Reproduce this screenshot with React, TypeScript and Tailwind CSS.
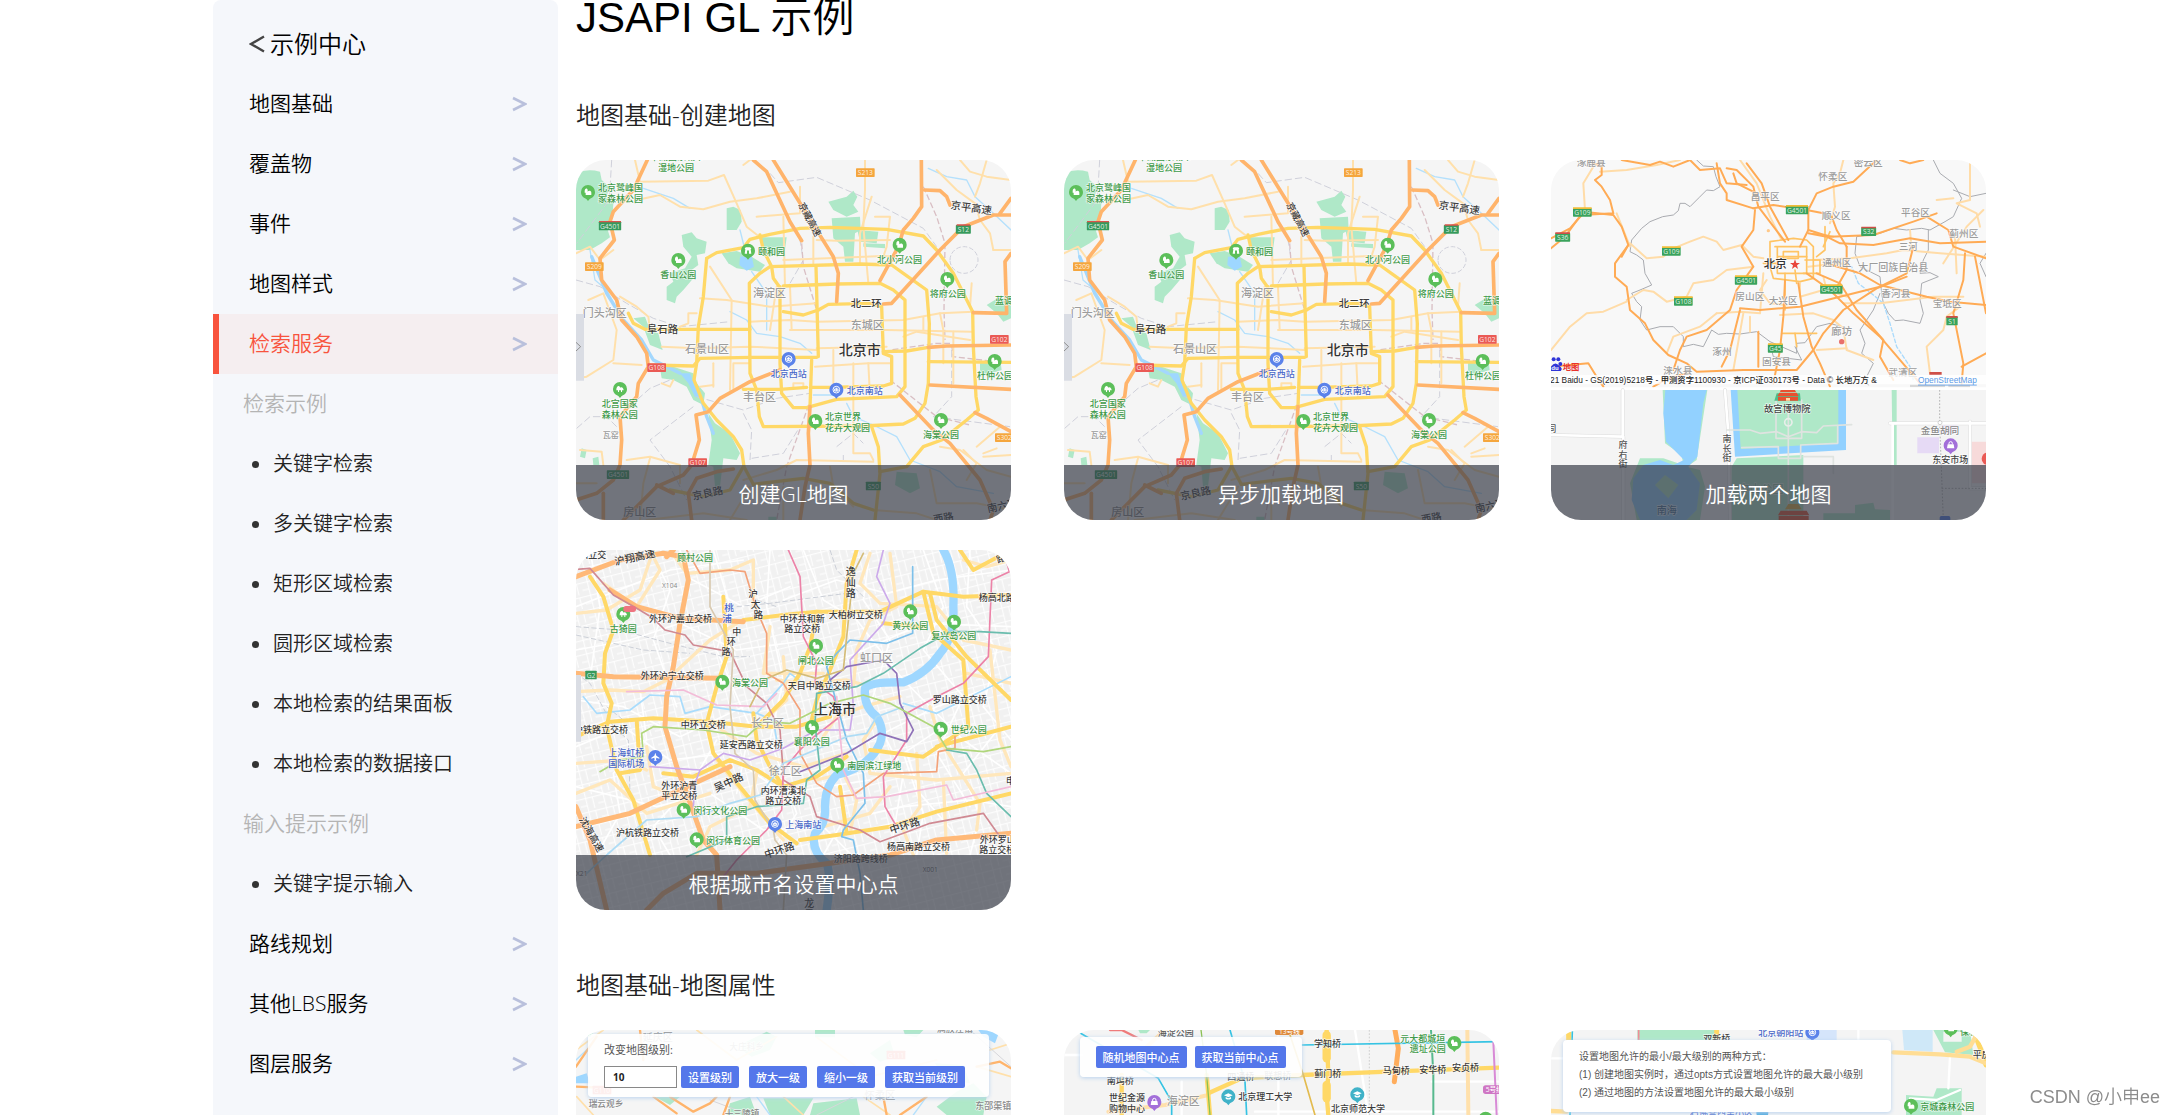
import type { ReactNode } from "react";

type Road = { color: string; width: number; dash?: string; paths: string[] };

// text, x, y (middle of the line), size, color, rotation
type Label = [string, number, number, number, string, number?];

// text, x, y, background
type Shield = [string, number, number, string];

const GREEN = "#3f9a4a";
const GRAY = "#9c9c9c";
const DARK = "#3c3c3c";
const BLUE = "#4a68c8";
const PARK = "#afe8c8";
const WATER = "#9ed7ff";
const ORANGE = "#ffb46b";
const YELLOW = "#ffd866";
const LIGHT = "#ffe0ab";

const Roads = ({ roads }: { roads: Road[] }) => (
    <>
        {roads.map((road, i) => (
            <g
                key={i}
                fill="none"
                stroke={road.color}
                strokeWidth={road.width}
                strokeDasharray={road.dash}
                strokeLinejoin="round"
                strokeLinecap={road.dash ? "butt" : "round"}
            >
                {road.paths.map((d) => (
                    <path key={d} d={d} />
                ))}
            </g>
        ))}
    </>
);

const Labels = ({ labels }: { labels: Label[] }) => (
    <g stroke="#fff" strokeWidth="4" strokeOpacity="0.7" paintOrder="stroke" dominantBaseline="central">
        {labels.map(([text, x, y, size, color, rotate]) => (
            <text
                key={`${text}${x}${y}`}
                x={x}
                y={y - 2}
                fontSize={size}
                fill={color}
                transform={rotate ? `rotate(${rotate} ${x} ${y})` : undefined}
            >
                {text}
            </text>
        ))}
    </g>
);

// Text that runs from top to bottom
const VerticalLabel = ({
    text,
    x,
    y,
    size,
    color,
    lean = 0,
}: {
    text: string;
    x: number;
    y: number;
    size: number;
    color: string;
    lean?: number;
}) => (
    <g fill={color} fontSize={size} textAnchor="middle" stroke="#fff" strokeWidth="4" strokeOpacity="0.7" paintOrder="stroke">
        {text.split("").map((char, i) => (
            <text key={i} x={x + i * lean} y={y + i * (size + 2)}>
                {char}
            </text>
        ))}
    </g>
);

const Shields = ({ shields }: { shields: Shield[] }) => (
    <g fontSize="20" textAnchor="middle" dominantBaseline="central">
        {shields.map(([text, x, y, color]) => {
            const w = 12 + text.length * 11;
            return (
                <g key={`${text}${x}${y}`}>
                    <rect x={x - w / 2} y={y - 13} width={w} height="26" rx="2" fill={color} />
                    <text x={x} y={y} fill="#fff" fillOpacity="0.85">
                        {text}
                    </text>
                </g>
            );
        })}
    </g>
);

const Pin = ({ x, y, color = "#5cbf5a", kind = "park" }: { x: number; y: number; color?: string; kind?: string }) => (
    <g transform={`translate(${x} ${y})`}>
        <path d="M-21 0A21 21 0 1 1 21 0C21 12 12 18 5 21L0 27L-5 21C-12 18 -21 12 -21 0Z" fill={color} />
        {kind === "park" && (
            <path d="M-10 -3C-10 -13 -1 -13 -1 -5V-1C1 -5 10 -5 10 2V9H-7V2H-10Z" fill="#fff" />
        )}
        {kind === "tree" && (
            <path d="M-11 4C-12 -4 -6 -11 -2 -8C-1 -6 0 -5 1 -4C5 -8 11 -3 11 4H6V9H3V4H-3V9H-6V4Z" fill="#fff" />
        )}
        {kind === "palace" && (
            <path d="M-10 -7L-6 -10H6L10 -7L8 -4L10 9H3V2A3 3 0 0 0 -3 2V9H-10L-8 -4Z" fill="#fff" />
        )}
        {kind === "rail" && (
            <g fill="none" stroke="#fff" strokeWidth="3">
                <circle r="10" />
                <path d="M-5 -2H5V4H-5ZM0 -6V4" />
            </g>
        )}
        {kind === "bag" && (
            <>
                <path d="M-9 -3H9L11 9H-11Z" fill="#fff" />
                <path d="M-5 -3V-6A5 5 0 0 1 5 -6V-3" fill="none" stroke="#fff" strokeWidth="3" />
            </>
        )}
        {kind === "school" && <path d="M0 -9L13 -3L0 3L-13 -3ZM-8 2V7Q0 12 8 7V2L0 6Z" fill="#fff" />}
        {kind === "plane" && (
            <path d="M0 -13L3 -4L12 2V5L3 2L2 8L5 11H-5L-2 8L-3 2L-12 5V2L-3 -4Z" fill="#fff" />
        )}
    </g>
);

const MapSvg = ({ viewBox, fill, children }: { viewBox: string; fill: string; children: ReactNode }) => (
    <svg
        viewBox={viewBox}
        preserveAspectRatio="xMidYMin slice"
        aria-hidden="true"
        className={`block h-full w-full font-medium ${fill}`}
    >
        {children}
    </svg>
);

const beijingRoads: Road[] = [
    {
        color: "#cfd0da", width: 3, dash: "22 9",
        paths: [
            "M125 30L118 150L20 280", "M600 70L625 98L740 82L900 150L1060 235L1100 290", "M18 390L90 410L170 460L250 505L330 530L480 515",
            "M20 835L60 800L110 800L140 830", "M155 790L240 715L300 690", "M380 740L520 780L620 745L720 730", "M370 770L240 870L300 950L350 1050",
            "M540 930L545 840L520 790", "M545 925L640 910L690 830", "M1145 600L1145 740L1090 800", "M800 890L850 850L880 880", "M820 915L820 930",
            "M660 400L700 330L690 270", "M1090 800L1320 830",
        ],
    },
    { color: "#cfd0da", width: 3, dash: "14 6", paths: ["M1140 330A42 40 0 1 1 1224 330A42 40 0 1 1 1140 330"] },
    {
        color: "#d9bfc4", width: 4, dash: "18 8",
        paths: [
            "M1060 110L1100 200L1125 280L1122 480L1125 570", "M695 280L700 350L740 480", "M1140 580L1100 580L960 600", "M725 740L650 950L620 1110",
            "M960 690L1100 800L1200 825", "M1145 585L1150 620L1323 640",
        ],
    },
    {
        color: "#b4e0fc", width: 4,
        paths: [
            "M220 115L310 145L360 175", "M1075 55L1130 80L1190 90L1215 140L1270 190L1323 240", "M510 240L525 300", "M545 365L590 430L590 540",
            "M480 485L530 510L560 550L630 560L690 580L725 610", "M60 300L75 390L110 420L140 475", "M730 735L790 735L800 720", "M830 760L850 800L910 825L980 860L1020 930L1110 965L1160 1010L1270 1030",
        ],
    },
    { color: "#a3d7fd", width: 10, paths: ["M65 320L110 430L160 510L215 570L250 630L330 670", "M395 750L410 800L430 850"] },
    {
        color: LIGHT, width: 6,
        paths: [
            "M195 30L210 95L415 92L462 75L500 160L530 230L570 262", "M200 150L270 135L330 170L400 178L480 155L560 145L660 125", "M540 30L520 45",
            "M885 30L885 120L880 230L895 400", "M870 340L870 250L905 140", "M560 200L690 190L690 110", "M18 310L60 290L90 330L130 300",
            "M640 330L940 318L980 320", "M645 410L640 200", "M660 410L665 540", "M480 720L485 450L420 350", "M390 445L470 450L600 470L740 460",
            "M540 515L660 510L740 515L1000 510L1110 490L1210 485", "M660 540L950 540L1205 545", "M1000 560L1040 545L1200 570", "M740 595L950 590",
            "M275 590L380 595L540 590L740 600", "M55 450L100 430L140 540L130 630L50 680L18 685", "M130 640L215 645", "M275 700L300 710L310 690",
            "M150 440L200 470L235 500L240 540", "M380 490L355 490L355 520L330 530", "M430 710L430 640", "M390 710L430 705", "M790 600L790 700",
            "M735 650L895 640L960 640", "M850 640L850 910L900 910L910 930", "M895 640L900 740", "M490 715L490 640L540 640", "M670 715L670 700L700 700L700 715",
            "M730 260L730 340", "M740 270L800 272L960 270", "M915 200L960 200L950 290L940 320", "M1100 60L1160 120L1215 160L1230 210L1260 250L1270 300",
            "M1250 30L1230 100L1215 140", "M1170 30L1200 65L1250 80L1323 90", "M1270 300L1323 300", "M1110 490L1120 540L1120 640", "M1150 545L1150 700",
            "M1205 400L1200 470", "M1110 890L1170 900L1250 960L1323 980", "M1180 900L1220 940L1190 990", "M1220 890L1290 830", "M1280 895L1240 910",
            "M1240 920L1323 915", "M30 900L95 905L100 945", "M170 930L240 920L330 945L330 1000", "M240 925L220 1000L210 1110", "M520 990L620 960L680 930L910 935",
            "M18 1000L80 1000", "M230 1110L400 1090L530 1110", "M540 1010L480 1110", "M780 950L790 1010L850 1070", "M640 1010L640 1110",
            "M850 1060L910 1080L1040 1090L1100 1110", "M1080 960L1100 1060L1220 1060L1323 1080", "M620 410L600 540", "M1060 500L1060 540",
        ],
    },
    {
        color: YELLOW, width: 10,
        paths: [
            "M410 325L440 308L520 293L540 268L600 253L690 235L780 232L950 238L1060 258L1100 300L1150 370L1208 485L1210 590L1218 740L1225 780L1190 810L1115 870L1060 890L1010 950L930 965",
            "M410 325L400 440L385 530L380 640L372 690L400 760L440 810L490 860L515 900L522 950L550 1003",
            "M600 350L870 342L965 345L1000 370L1070 420L1078 520L1075 700L1065 760L1035 805L1000 822L880 828L580 830L568 800L560 720L540 670L538 400L570 370L600 350",
            "M640 408L800 402L930 400L970 420L1005 450L1005 590L1005 710L980 740L800 748L710 773L670 773L635 730L630 640L630 410",
            "M745 480L775 463L900 460L935 470L940 610L965 620L965 700L940 708L780 712L725 712",
            "M725 630L720 770", "M738 350L745 620", "M640 485L700 495L745 480", "M235 645L370 648L390 625L540 622L740 622",
            "M175 490L190 520L225 538L385 538L540 538", "M570 255L580 300L605 350L610 385L628 410", "M520 718L630 718L710 712", "M1075 635L1323 637",
            "M905 830L925 890L930 970L915 1110", "M940 605L1010 603L1075 592", "M550 1003L700 985L780 1000L850 1060L910 1080", "M520 950L480 1020L400 1040L300 1020",
        ],
    },
    {
        color: ORANGE, width: 11,
        paths: [
            "M232 30L190 120L130 185L120 215L133 270L90 325L95 390L140 450L155 510L200 560L230 610L235 650L205 700L200 740L150 800L155 870L150 945L130 990L80 1030L18 1050",
            "M100 1030L100 1110", "M610 30L740 240L790 320L805 370L800 455", "M550 30L590 65L660 215L695 272", "M1054 30L1055 170L1030 205L1000 240L985 290L930 392",
            "M1064 120L1110 122L1130 140L1140 165", "M1323 195L1270 195L1180 230L1110 300L965 460L940 462", "M1323 145L1290 190", "M1323 310L1305 335L1310 490L1210 488",
            "M1075 592L1130 588L1323 585", "M1080 705L1323 718", "M990 735L1090 840L1140 880L1230 990L1270 1080L1260 1110", "M1215 788L1250 805L1323 845",
            "M630 660L540 695L450 745L415 785L378 795L388 870L365 945L340 975L260 1010L190 1080L160 1110", "M720 770L715 850L720 945L705 1010L690 1110",
            "M490 957L440 965L380 985L355 1030L365 1110", "M260 1005L310 1030",
        ],
    },
];

const BeijingMap = () => (
    <MapSvg viewBox="18 30 1305 1080" fill="bg-[#f5f5f5]">
        <g fill={PARK}>
            <path d="M18 70Q50 55 90 65L95 90L118 110L110 140L130 160L128 190L110 230L120 262L95 280L60 300L18 300Z" />
            <path d="M335 255L365 247L380 265L410 275L405 310L380 315L385 345L365 360L370 385L340 420L320 440L315 460L290 450L290 410L310 395L300 370L345 355L365 320L340 290Z" />
            <path d="M470 175L490 170L512 180L515 215L500 240L470 240Z" />
            <path d="M575 262L650 262L645 300L600 320L585 318Z" />
            <path d="M455 310L500 303L545 320L585 345L570 365L500 355L475 340Z" />
            <path d="M775 155L830 140L850 122L862 140L850 165L865 185L830 200L790 180Z" />
            <path d="M785 205L870 200L872 240L855 250L850 335L825 335L820 290L790 265Z" />
            <path d="M862 240L925 245L920 280L870 275ZM880 280L945 282L945 295L880 290Z" />
            <path d="M190 505L225 500L240 540L265 550L278 600L240 585L220 530Z" />
            <path d="M270 655L310 650L370 670L380 700L405 730L400 765L370 750L350 710L310 690L275 685Z" />
            <path d="M415 790L435 820L480 850L510 910L500 930L460 925L450 1010L435 1010L430 950L415 945L425 870Z" />
            <path d="M1250 465L1290 440L1323 450V505L1300 515L1280 490Z" />
            <path d="M1230 640L1290 620L1295 660L1230 680Z" />
            <path d="M980 965L1040 970L1050 1015L1020 1030L975 1005Z" />
            <path d="M35 895L50 900L45 925L30 920ZM68 925L85 920L88 945L70 945ZM595 1100L620 1100V1110H595Z" />
        </g>
        <g fill={WATER}>
            <path d="M510 320L545 318L552 350L530 362L508 345Z" />
            <path d="M330 670L360 670L375 710L395 745L375 740L355 700Z" />
        </g>
        <Roads roads={beijingRoads} />
        <Labels
            labels={[
                ["平湖国家城市", 240, 22, 27, GREEN], ["湿地公园", 264, 53, 27, GREEN], ["北京鹭峰国", 84, 115, 27, GREEN], ["家森林公园", 84, 146, 27, GREEN],
                ["香山公园", 271, 375, 27, GREEN], ["颐和园", 564, 306, 27, GREEN], ["北小河公园", 921, 329, 27, GREEN], ["将府公园", 1079, 432, 27, GREEN],
                ["蓝调庄园", 1275, 454, 27, GREEN], ["杜仲公园", 1221, 678, 27, GREEN], ["北宫国家", 95, 763, 27, GREEN], ["森林公园", 95, 794, 27, GREEN],
                ["北京世界", 765, 802, 27, GREEN], ["花卉大观园", 765, 833, 27, GREEN], ["海棠公园", 1059, 855, 27, GREEN], ["北京西站", 602, 672, 27, BLUE],
                ["北京南站", 830, 723, 27, BLUE], ["海淀区", 549, 430, 33, GRAY], ["门头沟区", 38, 490, 33, GRAY], ["东城区", 842, 525, 33, GRAY],
                ["石景山区", 345, 598, 33, GRAY], ["丰台区", 519, 742, 33, GRAY], ["瓦窑", 98, 856, 24, GRAY], ["房山区", 160, 1086, 33, "#888"],
                ["北二环", 842, 461, 31, DARK], ["阜石路", 231, 539, 31, DARK], ["北京市", 806, 599, 42, "#333"], ["京平高速", 1142, 166, 31, DARK, 8],
                ["京良路", 368, 1040, 31, DARK, -12], ["南六环", 1252, 1078, 31, DARK, -12], ["京藏高速", 692, 160, 28, DARK, 62], ["西路", 1090, 1110, 31, DARK, -10],
            ]}
        />
        <Shields
            shields={[
                ["G4501", 120, 228, "#369a5c"], ["S209", 73, 350, "#f5a63d"], ["S213", 886, 68, "#f5a63d"], ["S12", 1180, 238, "#369a5c"], ["G102", 1288, 568, "#ea5a55"],
                ["G108", 260, 653, "#ea5a55"], ["G107", 383, 938, "#ea5a55"], ["S302", 1303, 863, "#f5a63d"], ["G4501", 144, 974, "#369a5c"], ["S50", 910, 1008, "#369a5c"],
            ]}
        />
        <path d="M87 213H153V217H87ZM1160 223H1200V227H1160Z" fill="#d9534b" />
        <Pin x={54} y={126} />
        <Pin x={325} y={330} />
        <Pin x={534} y={302} kind="palace" />
        <Pin x={989} y={284} />
        <Pin x={1132} y={387} />
        <Pin x={1274} y={633} />
        <Pin x={150} y={717} kind="tree" />
        <Pin x={736} y={813} />
        <Pin x={1113} y={810} />
        <Pin x={656} y={627} color="#5b82ea" kind="rail" />
        <Pin x={799} y={719} color="#5b82ea" kind="rail" />
        <path d="M18 492H42V692H18Z" fill="#dadde4" />
        <path d="M18 577L32 590L18 603" fill="none" stroke="#8f8f8f" strokeWidth="3" />
    </MapSvg>
);

const regionRoads: Road[] = [
    {
        color: "#a9abb0", width: 3,
        paths: [
            "M470 30L490 48L520 50L528 80L540 110L520 122L500 120L478 142L450 170L435 160L420 160L415 182L400 195L368 200L330 215L305 235L275 270L270 305L290 315L310 330L315 370L335 405L300 420L275 430L290 455L305 470L300 510L320 540L360 530L400 530L430 560L430 590L460 583L490 590L515 540L535 553L560 550L600 552L650 545L690 575L770 610L770 580L795 578L830 530L870 520L920 535",
            "M1180 30L1200 70L1240 100L1265 145L1240 200L1215 215L1170 240L1145 235L1100 240L1060 235L1020 250L950 260L945 310L960 350L1020 380L1025 430L1030 460L1045 490L1065 512L1090 510L1140 520L1150 490L1140 450L1145 400L1195 380L1170 368L1140 370L1150 330L1165 300L1165 240",
            "M1020 430L1000 480L960 540L975 580L965 610L1000 640L975 690L985 705", "M690 580L700 620L785 630L765 590", "M1240 120L1290 140L1338 130", "M1338 310L1320 340L1338 380",
        ],
    },
    { color: "#a9dafc", width: 4, dash: "14 4", paths: ["M910 340L935 350L955 400L1000 435L1030 460L1050 520L1070 590L1110 650L1120 690"] },
    {
        color: "#ffdca8", width: 6,
        paths: [
            "M160 50L130 100L135 180", "M180 65L260 60L350 45L420 30", "M270 280L320 325L370 320L400 295L450 275L490 260L530 275L550 300L605 285L640 320L670 325",
            "M260 450L310 420L340 425L380 455L440 440L460 400L520 390L560 360L640 350", "M33 600L90 530L140 490L190 485L260 455", "M230 190L270 290", "M600 30L650 100L690 200L725 270",
            "M910 30L900 70L880 100L885 170L870 220", "M1290 40L1290 150L1250 160L1310 190L1320 230", "M1190 150L1240 145", "M820 330L930 325L1040 310L1090 300L1200 310L1338 320",
            "M805 350L850 345L920 340", "M720 495L820 490L880 510L910 535L920 600L1000 630", "M530 490L480 530L400 560L380 610", "M530 490L600 485L660 490L670 370", "M610 490L580 660",
            "M630 500L630 545", "M830 600L920 595", "M910 460L1020 460L1180 440L1270 440", "M1260 470L1220 500L1210 540L1160 590L1170 670", "M1330 180L1280 230L1210 340", "M1110 240L1115 300",
            "M1245 260L1250 370", "M680 390L660 420L690 460L740 465", "M780 400L780 440L850 420", "M850 380L860 420L920 440",
        ],
    },
    {
        color: "#ffc464", width: 5,
        paths: [
            "M705 290H800V370H712V290", "M690 275L760 265L800 270L820 290V385L780 395L700 385L690 350Z", "M730 305H775V325H730Z", "M670 340H712", "M795 330H840V370H790", "M735 370V480",
            "M765 360L770 400", "M820 250L880 260", "M725 550L830 550", "M765 550L770 590", "M855 230V300L830 320", "M870 245L850 290", "M715 320H800",
        ],
    },
    {
        color: "#ffab55", width: 6,
        paths: [
            "M33 265L90 235L125 195L220 190L210 150L185 110L165 90L185 75L185 50L160 40", "M33 295L75 260L130 185L220 195L245 230L265 285L225 340L225 380L260 410L270 480L315 520L340 570L385 615L440 640L470 665L610 660L770 660L820 600L850 550L910 480L1010 415L1100 380",
            "M245 30L330 45L360 35L400 50L450 30L480 60L540 55L560 100L620 105", "M530 40L540 100L560 130L560 150L640 175", "M580 70L590 100L650 130", "M560 55L590 60L640 110L655 170L735 275", "M620 40L665 100L690 170L745 270",
            "M640 175L700 165L800 180L850 190", "M645 180L640 240L605 290L640 350L590 420L570 480L500 540L440 560L420 600L400 660", "M1010 30L940 95L880 110L830 130L805 180L805 240L780 290", "M805 240L870 260L1000 255L1120 215L1190 190", "M875 200L890 240L920 290",
            "M805 250L860 260L900 280L1000 285L1110 265L1200 280L1338 275", "M875 345L960 370L1020 405L1160 440L1230 455L1338 465", "M1160 200L1225 240L1240 290L1338 325", "M1275 310L1270 390L1240 490L1270 640L1265 700",
            "M1338 610L1265 650", "M1305 320L1338 490", "M800 370L870 420L940 490L1020 560L1140 700", "M830 370L900 400L950 480L1030 570L1020 620L1060 690",
            "M735 390L730 500L720 600L700 700", "M775 400L790 500L815 590L840 640L870 710", "M655 545V650", "M600 480L570 600L545 650", "M600 475L660 480L780 470L900 440L1020 410L1100 370L1120 290", "M920 290V360L880 430",
            "M245 320L265 285L250 310", "M33 650L145 640L170 680L190 710", "M340 710L385 685L440 670", "M1080 30L1110 40L1150 30",
        ],
    },
];

const TwoMaps = () => (
    <MapSvg viewBox="33 30 1305 1080" fill="bg-[#f8f8f8]">
        <Roads roads={regionRoads} />
        <Labels
            labels={[
                ["涿鹿县", 110, 40, 29, GRAY], ["密云区", 941, 40, 29, GRAY], ["怀柔区", 835, 80, 29, GRAY], ["昌平区", 632, 140, 29, GRAY], ["顺义区", 845, 198, 29, GRAY],
                ["平谷区", 1083, 190, 29, GRAY], ["蓟州区", 1228, 252, 29, GRAY], ["三河", 1077, 291, 28, GRAY], ["通州区", 847, 338, 29, GRAY], ["大厂回族自治县", 955, 354, 30, GRAY],
                ["香河县", 1024, 431, 29, GRAY], ["房山区", 586, 441, 29, GRAY], ["大兴区", 686, 454, 29, GRAY], ["宝坻区", 1178, 461, 29, GRAY], ["廊坊", 874, 546, 31, GRAY],
                ["涿州", 517, 607, 29, GRAY], ["固安县", 666, 637, 29, GRAY], ["涞水县", 370, 663, 29, GRAY], ["武清区", 1045, 668, 29, GRAY], ["北京", 671, 342, 35, "#333"],
            ]}
        />
        <path d="M765 328L769 339H780L771 346L774 357L765 350L756 357L759 346L750 339H761Z" fill="#e8453c" />
        <circle cx="905" cy="575" r="8" fill="#e8706b" />
        <circle cx="685" cy="242" r="5" fill="#ffc98a" />
        <Shields
            shields={[
                ["G109", 127, 187, "#3aa35c"], ["S36", 68, 262, "#3aa35c"], ["G4501", 771, 180, "#3aa35c"], ["S32", 986, 245, "#3aa35c"], ["G109", 394, 304, "#3aa35c"],
                ["G4501", 618, 391, "#3aa35c"], ["G4501", 874, 418, "#3aa35c"], ["G108", 430, 454, "#3aa35c"], ["S1", 1236, 513, "#3aa35c"], ["G45", 706, 595, "#3aa35c"],
            ]}
        />
        <path
            d="M99 172H155V177H99ZM738 165H804V170H738ZM366 289H422V294H366ZM585 376H651V381H585ZM841 403H907V408H841ZM402 439H458V444H402ZM684 580H728V585H684Z"
            fill="#f0bd3a"
        />
        <path d="M46 247H90V252H46ZM964 230H1008V235H964ZM1219 498H1253V503H1219ZM1168 666H1205V674H1168Z" fill="#cf4f47" />
        <path d="M1110 704H1215V712H1110ZM1225 704H1290V712H1225Z" fill="#d8d8d8" />
        <path d="M33 675H1338V703H33Z" fill="#fff" fillOpacity="0.8" />
        <g fill="#2f35d8">
            <circle cx="41" cy="628" r="6" />
            <circle cx="55" cy="628" r="6" />
            <circle cx="61" cy="642" r="6" />
            <path d="M33 650Q46 632 58 648Q70 656 62 663H33Z" />
        </g>
        <g fontSize="25" dominantBaseline="central" className="font-['Liberation_Sans','Noto_Sans_CJK_SC',sans-serif]">
            <text x="34" y="655" fontSize="18" fontWeight="700" fill="#fff">du</text>
            <text x="68" y="650" fontWeight="700" fill="#e8322d">地图</text>
            <text x="30" y="689" fill="#222">21 Baidu - GS(2019)5218号 - 甲测资字1100930 - 京ICP证030173号 - Data © 长地万方 &amp;</text>
            <text x="1134" y="689" fill="#5b9be8" textDecoration="underline">OpenStreetMap</text>
        </g>
        {/* city centre, lower half */}
        <path d="M33 712H1338V720H33Z" fill="#fff" />
        <path d="M33 720H1338V1110H33Z" fill="#f4f4f4" />
        <path d="M368 720H502L470 930L440 950L480 960L495 1010L480 1110H290L270 1000L300 925L370 925L430 945L425 915L375 880Z" fill={PARK} />
        <path d="M376 720H500L490 760L472 920L445 950L480 1000L470 1080L440 1110H300L275 1050L280 985L310 945L360 930L400 945L432 930L378 875L370 790Z" fill="#92d1ff" />
        <path d="M345 1005L375 975L415 1005L385 1045Z" fill={PARK} />
        <path d="M572 720H918V900L585 920Z" fill="#92d1ff" />
        <path d="M592 720H895V880L602 897Z" fill={PARK} />
        <path d="M590 925L790 915V1110H575V950Z" fill={PARK} />
        <path d="M1055 720H1070V945H1058ZM945 1065L1000 1058L1005 1078L1050 1080V1110H850V1090H945Z" fill={PARK} />
        <path d="M1132 862H1197V910H1132ZM1205 818H1250V850H1205Z" fill="#e6daf5" />
        <path d="M1292 875H1338V1000H1292Z" fill="#f7dada" />
        <Roads
            roads={[
                { color: "#dcdcdc", width: 11, paths: ["M248 720V860L33 855", "M555 720L565 850L570 1110", "M250 860L250 1110", "M1050 820H1338", "M1290 815V1015H1338"] },
                { color: "#fff", width: 8, paths: ["M248 720V860L33 855", "M555 720L565 850L570 1110", "M250 860L250 1110", "M1050 820H1338", "M1058 820V1110", "M1290 815V1015H1338"] },
                { color: "#dfe3e0", width: 5, paths: ["M560 840H630L660 850L710 845L745 860L785 845L830 848L850 828L935 824", "M708 750V865H785V750", "M745 770V1110", "M605 893L715 890V925H782V885L893 880V828", "M790 920H880V970"] },
                { color: "#b5b5b5", width: 3, dash: "5 5", paths: ["M1199 720V820L1210 1110", "M1205 1015L1338 1015"] },
            ]}
        />
        <circle cx="1200" cy="818" r="6" fill="#fff" stroke="#bbb" strokeWidth="2" />
        <circle cx="745" cy="817" r="11" fill="none" stroke="#e8eeea" strokeWidth="5" />
        <path d="M703 752L710 730L780 730L782 752Z" fill="#4fbd8b" />
        <path d="M722 720H765L768 726H720ZM718 728H770L776 738H712ZM714 740H774V752H714Z" fill="#e8502f" />
        <path d="M738 744H750V752H738Z" fill="#ffd7a0" />
        <path d="M745 1062H775L785 1078H735Z" fill="#e0b040" />
        <path d="M722 1082H800L808 1096H714ZM716 1098H806V1110H716Z" fill="#e8502f" />
        <Labels
            labels={[
                ["故宫博物院", 672, 777, 28, "#444"], ["金鱼胡同", 1142, 844, 29, "#8a8a8a"], ["东安市场", 1177, 930, 27, "#444"], ["中山公园", 595, 1018, 34, "#8fc7a5"],
                ["南海", 350, 1082, 30, "#47749a"], ["同", 22, 836, 27, "#555"],
            ]}
        />
        <VerticalLabel text="府右街" x={249} y={894} size={27} color="#555" />
        <VerticalLabel text="南长街" x={561} y={876} size={27} color="#555" />
        <Pin x={1232} y={886} color="#a36fd9" kind="bag" />
        <circle cx="1344" cy="926" r="19" fill="#ea5a55" />
        <rect x="1199" y="1098" width="32" height="20" rx="5" fill="#4e7be8" />
    </MapSvg>
);

const shanghaiRoads: Road[] = [
    {
        color: "#fff", width: 5,
        paths: [
            "M18 200L300 90L520 60", "M60 30L90 200L60 420", "M240 30L300 150L250 300L320 500", "M18 330L180 300L330 250L500 330L720 300", "M430 30L480 200L440 330L540 560L500 760",
            "M600 30L590 200L640 420L600 600L680 820L600 945", "M700 30L760 180L860 240L1000 420L1180 600L1323 700", "M900 30L880 180L960 300L900 500L1000 700L960 945",
            "M1060 30L1120 200L1060 330L1180 470L1100 640L1200 800", "M1200 30L1190 200L1280 330L1240 500L1323 600", "M18 620L160 560L300 660L470 640L640 760L900 720",
            "M80 945L150 820L130 700L230 600L210 450", "M18 740L260 800L420 760L580 870L760 860L860 960", "M300 945L250 860L360 740L440 600", "M760 945L820 840L1000 800L1200 780L1323 800",
            "M1040 945L1060 820L1000 640L1120 560", "M640 180L800 120L950 160L1100 120L1323 90", "M640 420L860 340L1060 250L1323 260", "M700 600L860 620L1100 500L1323 420",
            "M1200 945L1230 830L1180 700L1290 560", "M330 30L350 110L520 200L660 140", "M1010 640L1050 760L1170 900", "M18 480L160 500L330 590L520 500",
        ],
    },
    {
        color: "#ccd0d8", width: 3, dash: "16 7",
        paths: ["M18 260L150 270L300 310L460 350L540 350", "M18 285L220 330L360 340", "M500 200L600 190L830 160", "M780 30L800 90L880 170", "M18 400L60 430L130 560L175 600L180 760", "M110 500L160 540", "M560 180L620 200"],
    },
    {
        color: "#ffe7bb", width: 10,
        paths: [
            "M18 220L110 210L210 150L250 30", "M100 130L200 200L270 90L240 30", "M18 455L120 450L220 455L290 420L420 300L500 250", "M300 30L350 100L480 90L550 60L550 200", "M600 260L580 400L700 400L760 400",
            "M900 40L870 130L930 190L1100 200L1180 300L1323 330", "M960 40L980 200L900 240L860 330L850 440", "M990 470L880 500L800 530L760 590", "M880 450L920 540L880 600L900 700L1100 720L1323 700",
            "M18 760L120 720L230 820L420 760", "M230 620L250 740L350 780", "M440 560L560 640L700 680L830 640", "M440 660L520 760L640 900", "M560 700L540 800L420 860L380 945", "M1040 640L1050 800L1000 870L1030 945",
            "M1080 500L1110 600L1230 790L1220 870", "M1180 60L1250 80L1323 60", "M1190 400L1323 430", "M1260 330L1290 600L1323 680", "M640 350L650 480L560 560", "M18 670L160 660L230 690", "M760 860L900 820L960 740",
            "M740 720L820 700L860 780L840 880", "M1120 720L1130 940", "M620 420L700 430L830 420L900 440",
        ],
    },
    {
        color: WATER, width: 25,
        paths: ["M1120 30Q1155 90 1150 200Q1155 290 1110 340Q1070 400 1000 427Q900 425 885 445Q880 500 920 530Q945 570 930 610Q900 680 800 705Q765 740 765 800Q770 850 735 880Q720 930 770 970Q785 1010 770 1110"],
    },
    { color: "#a9dcfc", width: 5, paths: ["M40 470L80 520L180 510L240 465L330 470L345 520L420 500L560 520L640 430L660 400L700 430", "M560 520L610 540L620 600", "M1000 490L1100 520L1323 410"] },
    {
        color: YELLOW, width: 12,
        paths: [
            "M60 110L100 170L130 270L105 340L100 430L125 490L110 560L140 690L190 780L240 945", "M18 590L120 545L250 535L420 545L560 560L680 560L780 530", "M470 350L440 440L410 550L430 640L510 740L600 850L680 910",
            "M520 240L640 225L740 215L930 215L1060 155L1180 170L1323 165", "M460 170L470 350", "M740 215L720 320L690 400L640 480L560 560", "M860 30L830 130L820 290L780 390L740 480L720 560", "M690 900L800 885L960 860L1100 815L1323 760",
            "M1080 160L1100 240L1190 350L1323 480", "M1060 155L1090 280L1180 360L1195 560L1060 650L900 630", "M1323 560L1100 620", "M280 700L370 710L480 660L560 690L640 740L740 710L830 650", "M810 740L830 880", "M150 700L210 690L200 540",
            "M1170 30L1210 90L1323 30", "M940 250L1060 260", "M640 740L600 680L560 600L550 520",
        ],
    },
    {
        color: "#ffb978", width: 15,
        paths: [
            "M18 110L150 60L280 40L340 50L355 120L330 250L310 380L290 470L285 560L320 680L350 760L400 900L440 945L450 1110", "M120 150L200 200L330 235L520 245", "M18 400L130 410L450 415",
            "M18 860L180 820L350 740L480 680", "M18 800L60 900L110 1110", "M1323 880L1100 900L960 945L780 970L560 1000L380 1000L280 1060L230 1110", "M290 50L310 30",
        ],
    },
];

const metroLines: Road[] = [
    { color: "#d08a93", width: 5, paths: ["M18 88L60 85L130 165L200 205L250 235L285 270L345 285L370 315L480 335L530 440L590 490L630 570L640 700L640 720L720 770L740 830L870 870L930 905L1000 880L1080 850L1240 820L1290 890"] },
    { color: "#f3a27a", width: 5, paths: ["M350 30L390 100L480 90L525 95L560 210L590 280L590 400L640 430L690 510L690 640L740 730L800 770L850 765L940 700L1100 695L1105 635L1155 625L1155 590"] },
    { color: "#d8c9b0", width: 5, paths: ["M420 30V200L490 330L480 500L495 640L550 690L555 780L610 870L615 900L650 945L640 1110"] },
    { color: "#ec83a8", width: 5, paths: ["M655 30L690 110L700 290L740 370L735 430L790 470L810 530L720 600L690 630L640 690L635 810L590 870L500 960L460 1010", "M1310 65L1318 95L1265 120L1255 350L1180 430L1100 470L1010 520L1010 600L940 710L945 800L980 860"] },
    { color: "#ccaaea", width: 5, paths: ["M940 30L920 110L960 190L940 250L840 360L850 500L840 570L740 570L640 625L540 660L460 640L390 690L240 680", "M390 690L375 730L370 800"] },
    { color: "#7dc0ea", width: 5, paths: ["M1028 80V280L950 310L840 300L800 340L770 380L830 600L880 700L885 790L820 870L815 890L850 900L870 1000L880 1110"] },
    { color: "#aedcf5", width: 5, paths: ["M50 1000L110 945L230 840L380 830L480 790L570 765L640 670L830 590L890 580L920 530L1000 500"] },
    { color: "#8f72b8", width: 5, paths: ["M690 695L830 640L930 580L1010 605L1030 570L990 490L980 400L940 360L830 380L780 420"] },
    { color: "#6bbdae", width: 5, paths: ["M1323 280L1230 275L1140 275L1050 325L940 400L860 440L740 460L735 550L750 690L710 720L700 790L560 800L470 830L470 900L350 950", "M1130 630L1190 640L1220 690L1250 760L1323 830"] },
    { color: "#b0d67c", width: 5, paths: ["M90 695L150 660L220 650L215 580L250 560L400 570L530 590L580 545L660 550L780 490L880 465L960 490L1090 560L1130 625L1240 635L1323 620"] },
    { color: "#f3bcd8", width: 5, paths: ["M170 455L340 450L440 495L580 500L620 460", "M800 470L820 690L860 775L950 770L1130 735L1150 780L1323 740"] },
    { color: "#d4bc78", width: 5, paths: ["M540 500L580 420L650 390L740 415L820 390L830 290L850 100L880 40"] },
];

const ShanghaiMap = () => (
    <MapSvg viewBox="18 30 1305 1080" fill="bg-[#f1f1f1]">
        <defs>
            <pattern id="streets" width="54" height="42" patternUnits="userSpaceOnUse" patternTransform="rotate(-14)">
                <path d="M0 8H54M20 0V42M0 30H20M40 8V42" stroke="#fff" strokeWidth="3" fill="none" />
            </pattern>
        </defs>
        <path d="M18 30H1323V1110H18Z" fill="url(#streets)" />
        <Roads roads={shanghaiRoads} />
        <Roads roads={metroLines} />
        <Labels
            labels={[
                ["山立交", 28, 46, 27, DARK], ["沪翔高速", 134, 66, 31, DARK, -12], ["顾村公园", 321, 53, 27, GREEN], ["古猗园", 119, 268, 27, GREEN], ["外环沪嘉立交桥", 237, 237, 27, DARK],
                ["中环共和新", 629, 236, 27, DARK], ["路立交桥", 643, 267, 27, DARK], ["大柏树立交桥", 776, 224, 27, DARK], ["杨高北路", 1226, 173, 27, DARK], ["黄兴公园", 967, 258, 27, GREEN],
                ["复兴岛公园", 1084, 289, 27, GREEN], ["虹口区", 870, 353, 33, GRAY], ["闸北公园", 683, 362, 27, GREEN], ["外环沪宁立交桥", 212, 408, 27, DARK], ["海棠公园", 486, 430, 27, GREEN],
                ["天目中路立交桥", 653, 437, 27, DARK], ["罗山路立交桥", 1088, 479, 27, DARK], ["上海市", 732, 508, 42, "#333"], ["长宁区", 543, 548, 33, GRAY], ["中环立交桥", 332, 555, 27, DARK],
                ["沪铁路立交桥", 12, 571, 27, DARK], ["世纪公园", 1142, 570, 27, GREEN], ["襄阳公园", 671, 605, 27, GREEN], ["延安西路立交桥", 449, 615, 27, DARK], ["上海虹桥", 115, 640, 27, BLUE],
                ["国际机场", 115, 671, 27, BLUE], ["南园滨江绿地", 832, 678, 27, GREEN], ["徐汇区", 596, 694, 33, GRAY], ["外环沪青", 274, 738, 27, DARK], ["平立交桥", 274, 769, 27, DARK],
                ["吴中路", 434, 748, 31, DARK, -25], ["内环漕溪北", 572, 752, 27, DARK], ["路立交桥", 586, 783, 27, DARK], ["申江路", 1308, 724, 27, DARK], ["闵行文化公园", 370, 812, 27, GREEN],
                ["上海南站", 646, 855, 27, BLUE], ["中环路", 960, 872, 31, DARK, -18], ["沪杭铁路立交桥", 138, 880, 27, DARK], ["闵行体育公园", 408, 902, 27, GREEN], ["杨高南路立交桥", 951, 922, 27, DARK],
                ["外环罗山", 1229, 900, 27, DARK], ["路立交桥", 1228, 931, 27, DARK], ["中环路", 584, 946, 31, DARK, -18], ["济阳路跨线桥", 791, 956, 27, "#444"], ["沈海高速", 34, 834, 29, DARK, 60],
                ["路", 1280, 62, 28, DARK, -20], ["X104", 276, 139, 20, "#888"], ["X001", 1058, 991, 20, "#666"], ["X21", 18, 1002, 20, "#666"],
            ]}
        />
        <VerticalLabel text="逸仙路" x={842} y={106} size={30} color={DARK} />
        <VerticalLabel text="桃浦" x={477} y={214} size={29} color={BLUE} lean={-6} />
        <VerticalLabel text="沪太路" x={549} y={172} size={29} color={DARK} lean={8} />
        <VerticalLabel text="中环路" x={500} y={286} size={27} color={DARK} lean={-16} />
        <VerticalLabel text="龙吴" x={718} y={1102} size={30} color={DARK} />
        <Shields shields={[["G2", 63, 405, "#369a5c"]]} />
        <Pin x={160} y={222} kind="tree" />
        <rect x="160" y="198" width="38" height="18" rx="8" fill="#ee7480" />
        <Pin x={1021} y={214} />
        <Pin x={1152} y={245} />
        <Pin x={738} y={317} />
        <Pin x={457} y={425} />
        <Pin x={726} y={561} />
        <Pin x={1112} y={566} />
        <Pin x={802} y={674} />
        <Pin x={341} y={809} />
        <Pin x={380} y={898} />
        <Pin x={256} y={651} color="#5b82ea" kind="plane" />
        <Pin x={615} y={852} color="#5b82ea" kind="rail" />
        <path d="M18 405H33V605H18Z" fill="#dadde4" />
    </MapSvg>
);

const LevelMap = () => (
    <MapSvg viewBox="18 240 1305 1080" fill="bg-[#f5f5f5]">
        <g fill={PARK}>
            <path d="M45 250L75 240L60 262ZM520 280L590 245L620 260L600 300L545 320L515 300ZM735 240H795V262H735ZM1000 240H1060L1040 262L1005 255Z" />
            <path d="M900 310L960 270L975 320L930 335ZM255 440L330 440L300 465ZM480 460L540 440L560 495H470ZM580 445H730L700 495H600Z" />
            <path d="M730 460L860 445L870 495H720ZM1160 425L1210 400L1250 440L1240 495H1130L1100 470ZM1095 340L1180 345L1200 400L1130 390Z" />
        </g>
        <path d="M1225 240H1290L1275 280L1240 260ZM18 380L50 370L60 400L18 400Z" fill={WATER} />
        <Roads
            roads={[
                { color: "#b4e0fc", width: 4, paths: ["M560 440L600 495", "M1070 440L1030 495", "M18 330L60 290"] },
                { color: LIGHT, width: 5, paths: ["M18 300L100 240", "M380 240L500 330L620 260", "M740 262L900 380L1100 330", "M640 440L700 495", "M20 440L70 495", "M880 440L960 495", "M1220 350L1323 380", "M1260 300L1323 280"] },
                { color: "#d6d6da", width: 3, paths: ["M420 450L540 495", "M740 495L850 440", "M1200 240L1323 350"] },
                { color: ORANGE, width: 7, paths: ["M18 350L80 260", "M18 410L70 412", "M210 240L220 330", "M250 440L320 490", "M300 440L370 485L420 460L440 440", "M480 440L460 495", "M940 440L950 495", "M1220 350L1290 335L1323 355", "M990 495L1070 440"] },
            ]}
        />
        <Labels
            labels={[
                ["延庆区", 218, 262, 30, GRAY], ["大庄科乡", 478, 292, 26, GRAY], ["满族江镇", 1100, 238, 27, "#888"], ["怀柔区", 883, 438, 31, GRAY], ["瑞云观乡", 56, 465, 26, "#888"],
                ["十三陵镇", 464, 494, 26, "#888"], ["东邵渠镇", 1216, 467, 27, "#888"],
            ]}
        />
        <Shields shields={[["G110", 96, 420, "#ea5a55"], ["G111", 978, 315, "#ea5a55"]]} />
    </MapSvg>
);

const CenterMap = () => (
    <MapSvg viewBox="27 45 1305 1080" fill="bg-[#f4f4f4]">
        <path d="M250 45H285L275 55H255Z" fill={PARK} />
        <Roads
            roads={[
                { color: "#fff", width: 7, paths: ["M27 120H80", "M600 290H1332", "M670 45V300", "M1130 200H1332", "M380 200V300", "M900 45L940 300"] },
                { color: "#bdbdbd", width: 2, dash: "5 5", paths: ["M943 45V300"] },
                { color: LIGHT, width: 12, paths: ["M1237 45L1240 300", "M160 290L330 270L460 240", "M270 100L330 45"] },
                { color: YELLOW, width: 13, paths: ["M200 180V300", "M455 180L465 300", "M460 235L560 190L740 180L1000 170L1332 158", "M815 45L820 180L815 240L820 300"] },
                { color: YELLOW, width: 25, paths: ["M815 60V130", "M815 210V250"] },
                { color: "#ffad5c", width: 15, paths: ["M1020 45L1030 100L1018 200"] },
                { color: "#35c3e3", width: 5, paths: ["M60 45L310 190L350 260V300", "M740 90L1332 80", "M525 45L570 200L575 300"] },
                { color: "#8cc152", width: 4, paths: ["M438 45L455 180L465 300"] },
                { color: "#57b98e", width: 6, paths: ["M1128 45L1135 180V300"] },
                { color: "#d88ad6", width: 6, paths: ["M1315 80L1325 300"] },
                { color: "#e3bb4f", width: 5, paths: ["M700 45L745 180L780 300"] },
                { color: "#ef7b7b", width: 7, paths: ["M165 45H200L260 75"] },
            ]}
        />
        <Labels
            labels={[
                ["海淀公园", 308, 53, 27, "#555"], ["学知桥", 777, 88, 27, DARK], ["元大都城垣", 1036, 73, 27, GREEN], ["遗址公园", 1064, 103, 27, GREEN], ["蓟门桥", 778, 178, 27, DARK],
                ["马甸桥", 983, 168, 27, DARK], ["安华桥", 1093, 164, 27, DARK], ["安贞桥", 1191, 160, 27, DARK], ["四通桥", 517, 187, 27, DARK], ["联想桥", 628, 182, 27, "#777"],
                ["南坞桥", 155, 198, 27, DARK], ["世纪金源", 162, 250, 27, DARK], ["购物中心", 162, 281, 27, DARK], ["海淀区", 335, 259, 33, GRAY], ["北京理工大学", 550, 247, 27, DARK],
                ["北京师范大学", 828, 281, 27, DARK],
            ]}
        />
        <rect x="660" y="38" width="85" height="22" rx="5" fill="#e08a3a" />
        <rect x="1284" y="211" width="80" height="26" rx="8" fill="#cf76c4" />
        <g fill="#fff" fontSize="20" dominantBaseline="central">
            <text x="672" y="48">13号线</text>
            <text x="1292" y="223">5号线</text>
        </g>
        <Pin x={1198} y={84} />
        <Pin x={298} y={261} color="#a36fd9" kind="bag" />
        <Pin x={520} y={244} color="#40b2c8" kind="school" />
        <Pin x={907} y={238} color="#40b2c8" kind="school" />
        <Pin x={1292} y={311} />
    </MapSvg>
);

const LimitMap = () => (
    <MapSvg viewBox="33 45 1305 1080" fill="bg-[#f4f4f4]">
        <path d="M292 45H530V85H292ZM1180 45H1290L1300 120L1215 112ZM1098 240L1180 245L1190 220H1265V300H1098Z" fill={PARK} />
        <path d="M1087 45H1178V110L1092 105Z" fill="#cfe8f8" />
        <path d="M800 45H890V75H800Z" fill="#d5e5fb" />
        <path d="M1210 50H1265V80H1210Z" fill="#f4f4f4" />
        <Roads
            roads={[
                { color: "#fff", width: 7, paths: ["M33 130H90", "M955 45V75", "M1230 125L1225 220", "M1110 250L1190 255L1260 225"] },
                { color: "#35c3e3", width: 5, paths: ["M97 45L90 300"] },
                { color: "#ef8c96", width: 5, paths: ["M296 45V80"] },
                { color: YELLOW, width: 15, paths: ["M86 45V80", "M530 45V80", "M1338 150L1323 105L1300 45"] },
                { color: "#ffdd94", width: 13, paths: ["M1060 112L1200 118L1290 125L1338 145", "M1250 110L1290 95L1310 60", "M33 288L80 290"] },
            ]}
        />
        <Labels
            labels={[
                ["北京朝阳站", 655, 54, 27, BLUE], ["平房桥", 1298, 120, 27, DARK], ["双新桥", 490, 73, 27, DARK], ["保利公园", 1260, 50, 27, GREEN], ["京城森林公园", 1141, 276, 27, GREEN],
                ["石佛营西里小区", 450, 293, 27, BLUE],
            ]}
        />
        <Pin x={817} y={52} color="#5b82ea" kind="rail" />
        <Pin x={1232} y={40} />
        <Pin x={1113} y={272} />
        <circle cx="667" cy="293" r="18" fill="#4aa8dd" />
    </MapSvg>
);

const MapCard = ({ title, map, panel }: { title: string; map: ReactNode; panel?: ReactNode }) => (
    <article className="relative h-[360px] overflow-hidden rounded-[30px]">
        {map}
        {panel}
        <a
            href="#"
            className="absolute inset-x-0 bottom-0 flex h-[55px] items-center justify-center bg-[#393d49]/70 pt-1 text-[21px] text-white"
        >
            {title}
        </a>
    </article>
);

const PanelButton = ({ children }: { children: ReactNode }) => (
    <button type="button" className="h-[22px] rounded-xs bg-[#5477ea] px-[7px] text-[11px] leading-none font-medium whitespace-nowrap text-white">
        {children}
    </button>
);

const LevelPanel = () => (
    <div className="absolute top-1 left-3 h-[63px] w-[401px] rounded-sm bg-white/90 px-4 pt-2 font-normal shadow-[0_1px_4px_#b8d2ee]">
        <label htmlFor="level" className="block text-[11px] leading-4 text-[#555]">
            改变地图级别:
        </label>
        <div className="mt-1 flex items-center gap-[10px] pt-1">
            <div className="flex items-center gap-1">
                <input
                    id="level"
                    type="text"
                    defaultValue="10"
                    className="h-[22px] w-[73px] border border-[#888] bg-white px-2 text-[10px] font-bold text-[#222]"
                />
                <PanelButton>设置级别</PanelButton>
            </div>
            <PanelButton>放大一级</PanelButton>
            <PanelButton>缩小一级</PanelButton>
            <PanelButton>获取当前级别</PanelButton>
        </div>
    </div>
);

const CenterPanel = () => (
    <div className="absolute top-[7px] left-4 flex h-10 w-[222px] items-center justify-center gap-2 rounded-sm bg-white/90 shadow-[0_1px_4px_#b8d2ee]">
        <PanelButton>随机地图中心点</PanelButton>
        <PanelButton>获取当前中心点</PanelButton>
    </div>
);

const LimitPanel = () => (
    <div className="absolute top-[10px] left-3 h-[72px] w-[328px] rounded-sm bg-white px-4 pt-2 font-['Liberation_Sans','Noto_Sans_CJK_SC',sans-serif] text-[10px] leading-[18px] font-normal whitespace-nowrap text-[#555] shadow-[0_1px_4px_#b8d2ee]">
        <p>设置地图允许的最小/最大级别的两种方式：</p>
        <p>(1) 创建地图实例时，通过opts方式设置地图允许的最大最小级别</p>
        <p>(2) 通过地图的方法设置地图允许的最大最小级别</p>
    </div>
);

const searchGroups = [
    {
        title: "检索示例",
        items: ["关键字检索", "多关键字检索", "矩形区域检索", "圆形区域检索", "本地检索的结果面板", "本地检索的数据接口"],
    },
    { title: "输入提示示例", items: ["关键字提示输入"] },
];

const menu = [
    { title: "地图基础" },
    { title: "覆盖物" },
    { title: "事件" },
    { title: "地图样式" },
    { title: "检索服务", groups: searchGroups },
    { title: "路线规划" },
    { title: "其他LBS服务" },
    { title: "图层服务" },
];

const Sidebar = () => (
    <nav className="w-[345px] shrink-0 rounded-t-lg bg-[#f5f7fb] pt-[14px]">
        <a href="#" className="flex h-15 items-center gap-[5px] pl-9 text-2xl text-black">
            <svg viewBox="0 0 16 18" className="h-[18px] w-4" fill="none" stroke="#444" strokeWidth="2.4">
                <path d="M15 1.5L2 9L15 16.5" />
            </svg>
            示例中心
        </a>
        <ul>
            {menu.map((item) => (
                <li key={item.title}>
                    <a
                        href="#"
                        className={`flex h-15 items-center justify-between border-l-6 pr-[31px] pl-[30px] text-[21px] ${
                            item.groups ? "border-[#f8533d] bg-[#f5eef0] text-[#f8533d]" : "border-transparent text-black"
                        }`}
                    >
                        {item.title}
                        <svg viewBox="0 0 15 16" className="h-4 w-[15px]" fill="none" stroke="#b9c0dc" strokeWidth="2.6">
                            <path d="M1 2L13 8L1 14" />
                        </svg>
                    </a>
                    {item.groups?.map((group) => (
                        <div key={group.title}>
                            <h3 className="flex h-15 items-center pl-[30px] text-[21px] text-[#b4b4b4]">{group.title}</h3>
                            <ul>
                                {group.items.map((name) => (
                                    <li key={name} className="flex h-15 items-center gap-[14px] pl-[39px]">
                                        <span className="size-[7px] rounded-full bg-[#333]" />
                                        <a href="#" className="text-xl text-[#222]">
                                            {name}
                                        </a>
                                    </li>
                                ))}
                            </ul>
                        </div>
                    ))}
                </li>
            ))}
        </ul>
    </nav>
);

const Section = ({ title, children }: { title: string; children: ReactNode }) => (
    <section className="pt-[57px]">
        <h2 className="mb-[27px] text-2xl leading-9 text-[#222]">{title}</h2>
        <div className="grid grid-cols-[repeat(3,435px)] justify-between gap-y-[30px]">{children}</div>
    </section>
);

const App = () => {
    return (
        <div className="h-screen overflow-hidden bg-white pl-[25px] font-['Open_Sans','Noto_Sans_CJK_SC',sans-serif] font-[350]">
            <div className="mx-auto flex min-h-full max-w-[1773px]">
                <Sidebar />
                <main className="min-w-0 flex-1 pl-[18px]">
                    <h1 className="-mt-1 font-['Liberation_Sans','Noto_Sans_CJK_SC',sans-serif] text-[42px] leading-[44px] text-black">
                        JSAPI GL 示例
                    </h1>
                    <Section title="地图基础-创建地图">
                        <MapCard title="创建GL地图" map={<BeijingMap />} />
                        <MapCard title="异步加载地图" map={<BeijingMap />} />
                        <MapCard title="加载两个地图" map={<TwoMaps />} />
                        <MapCard title="根据城市名设置中心点" map={<ShanghaiMap />} />
                    </Section>
                    <Section title="地图基础-地图属性">
                        <MapCard title="设置地图级别" map={<LevelMap />} panel={<LevelPanel />} />
                        <MapCard title="设置地图中心点" map={<CenterMap />} panel={<CenterPanel />} />
                        <MapCard title="设置地图最大最小级别" map={<LimitMap />} panel={<LimitPanel />} />
                    </Section>
                </main>
            </div>
            <p className="fixed right-[14px] bottom-1 font-['Liberation_Sans','Noto_Sans_CJK_SC',sans-serif] text-lg leading-7 text-[#8c8c8c]">
                CSDN @小申ee
            </p>
        </div>
    );
};

export default App;
